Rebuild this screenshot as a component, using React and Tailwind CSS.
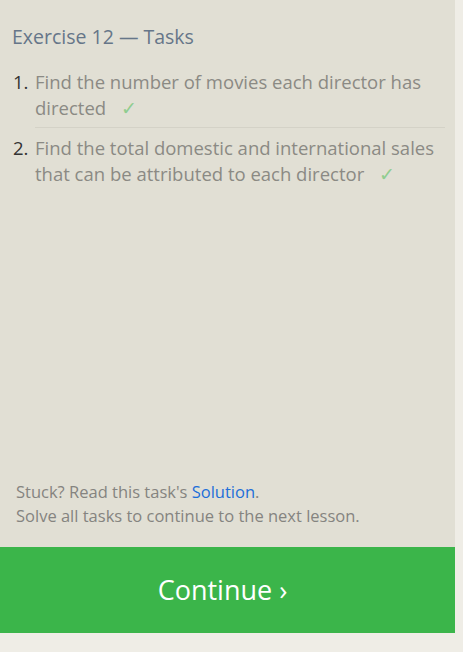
import React from 'react';

const tasks = [
  'Find the number of movies each director has directed',
  'Find the total domestic and international sales that can be attributed to each director',
];

const App = () => {
  return (
    <div className="h-[652px] w-full bg-[#efede6]" style={{ fontFamily: '"Open Sans", sans-serif' }}>
      <div className="flex h-[633px] w-[455px] flex-col bg-[#e1dfd4]">
        <div className="pl-3 pr-[10px] pt-[25px]">
          <h2 className="text-[19.5px] leading-6 text-[#667689]">Exercise 12 — Tasks</h2>
          <ol className="mt-[20px]">
            {tasks.map((task, i) => (
              <li key={i} className="flex">
                <span className="w-[23px] shrink-0 pl-px text-[18.5px] leading-[26px] text-[#333]">{i + 1}.</span>
                <div className={`flex-1 pb-[6px] text-[18.5px] leading-[26px] ${i === 0 ? 'mb-[7px] border-b border-[#d4d2c7]' : ''}`}>
                  <span className="text-[#8b8a84]">{task}</span>
                  <span className="ml-[15px] inline-block align-top text-[19px] leading-[26px] text-[#8fcd8f]">✓</span>
                </div>
              </li>
            ))}
          </ol>
        </div>
        <div className="flex-1" />
        <div className="px-4 pb-[19px] text-[16.5px] leading-6 text-[#858480]">
          <p>
            Stuck? Read this task's <a className="text-[#1e6fd9]">Solution</a>.
          </p>
          <p>Solve all tasks to continue to the next lesson.</p>
        </div>
        <button className="flex h-[86px] w-full items-center justify-center bg-[#3bb54a] pr-[10px] text-[27px] text-white">
          Continue ›
        </button>
      </div>
    </div>
  );
};

export default App;
